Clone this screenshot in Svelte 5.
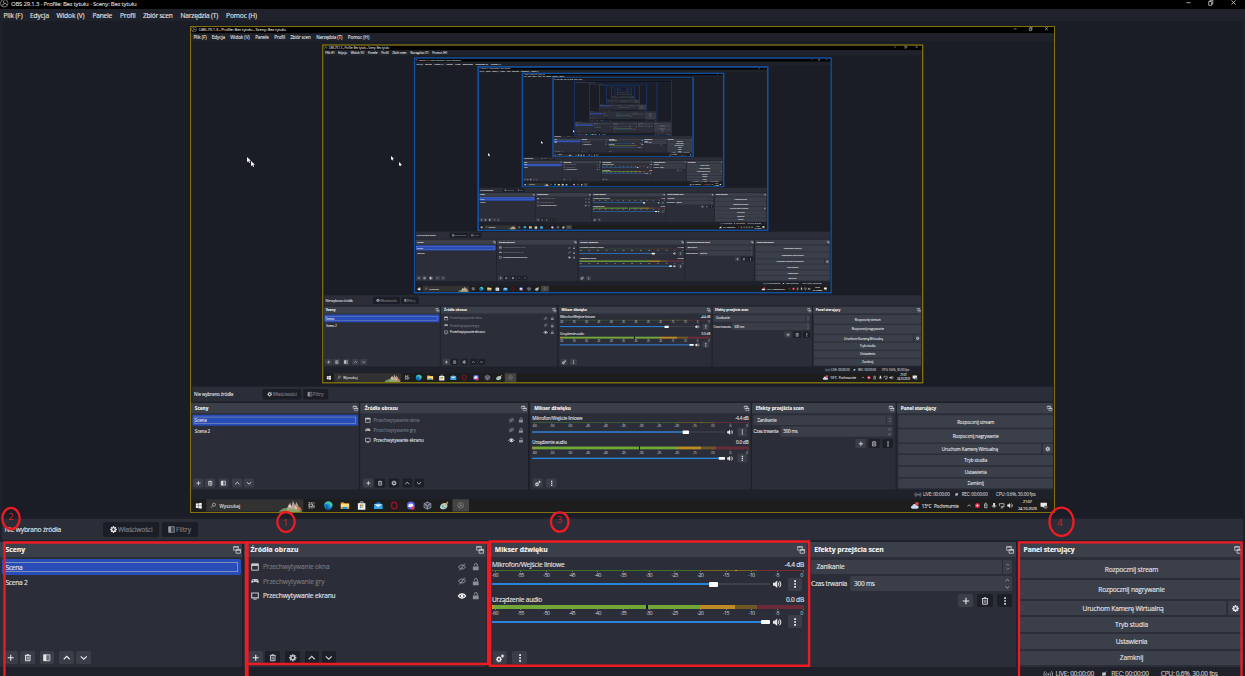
<script>
  const RATIO = 0.6935;
  const DEPTH = 15;
  const FAR = 7;

  const f = (d, c = 'currentColor') => ({ d, fill: c, stroke: 'none', w: 0 });
  const s = (d, w = 1.4, c = 'currentColor') => ({ d, fill: 'none', stroke: c, w });

  const icons = {
    plus: [s('M6 1.2v9.6M1.2 6h9.6', 1.7)],
    trash: [s('M1.3 2.2h9.4', 1.6), s('M2.4 3v7.8h7.2V3', 1.5), s('M4.6 4v5.2M6 4v5.2M7.4 4v5.2', 0.9), f('M4.2 .4h3.6v1.4H4.2z')],
    filter: [s('M1 1.2h10v9.6H1z', 1.2), f('M1 1h4.6v10H1z'), s('M7.6 1.6v8.8M9.4 1.6v8.8', 0.6)],
    up: [s('M1.2 8.4 6 3.8l4.8 4.6', 1.9)],
    down: [s('M1.2 3.8 6 8.4l4.8-4.6', 1.9)],
    gear: [s('M6 2.8a3.2 3.2 0 1 1 0 6.4a3.2 3.2 0 1 1 0-6.4z', 2.4), s('M6 .2v2M6 9.8v2M.2 6h2M9.8 6h2M1.9 1.9l1.3 1.3M8.8 8.8l1.3 1.3M10.1 1.9 8.8 3.2M3.2 8.8l-1.3 1.3', 2.3)],
    gears: [s('M4.2 5a2.5 2.5 0 1 1 0 5a2.5 2.5 0 1 1 0-5z', 2), s('M4.2 3.4v1.2M4.2 10.4v1.3M.1 7.5h1.3M7 7.5h1.3M1.3 4.6l.9.9M6.2 9.5l.9.9M7.1 4.6l-.9.9M2.2 9.5l-.9.9', 1.5), s('M9.2 1.5a1.3 1.3 0 1 1 0 2.6a1.3 1.3 0 1 1 0-2.6z', 1.4), s('M9.2.3v5M6.8 2.8h5', 0.8)],
    dots: [f('M4.7 .4h2.8v2.6H4.7zM4.7 4.7h2.8v2.6H4.7zM4.7 9h2.8v2.6H4.7z')],
    popout: [s('M8 5V1H1v5.4h3', 1.2), f('M1 .6h7.4v1.8H1z'), s('M4.6 5.2h6.6v5.6H4.6z', 1.3), f('M4.4 5h7v2h-7z')],
    window: [s('M1 1.4h10v9.4H1z', 1.5), f('M1 1h10v3.6H1z')],
    pad: [f('M3 3h6c2.600 0 3.400 5.800 1.600 6C9.200 9 9 7.600 7.900 7.600H4.100C3 7.600 2.800 9 1.400 9-.4 8.800.4 3 3 3z'), s('M2.400 5.200h2M3.400 4.200v2M8.400 5.200h1', 0.8, '#2b2e39')],
    screen: [s('M1 1.400h10v7.400H1z', 1.6), s('M3.500 10.900h5', 1.3)],
    eye: [s('M.6 6C3 1.800 9 1.800 11.400 6 9 10.200 3 10.200.6 6z', 1.8), f('M6 3.800a2.200 2.200 0 1 1 0 4.400a2.200 2.200 0 1 1 0-4.400z')],
    eyeoff: [s('M.8 6C3 2 9 2 11.200 6 9 10 3 10 .8 6z', 1.4), s('M10.500.8 1.800 11.200M8.200 4 4 9', 1.4)],
    lock: [f('M1.400 5.600h9.200v6H1.400z'), s('M8.600 5.600V3.200a2.400 2.400 0 0 0-4.800 0v.8', 1.6)],
    speaker: [f('M0 4h2.400L6 .8v10.400L2.400 8H0z'), s('M7.400 3.600c1.200 1.400 1.200 3.400 0 4.800M9.200 1.800c2.400 2.400 2.400 6 0 8.400', 1.500)],
    obs: [s('M6 .7a5.300 5.300 0 1 1 0 10.600a5.300 5.300 0 1 1 0-10.600z', 0.9), s('M6 6.200C4.600 5 4.600 3 6 2.200M6 6.200c1.800-.6 3.400.6 3.400 2.200M6 6.200C5.800 8 4 9 2.600 8.200', 1.3)],
    min: [s('M1 6.500h10', 1.8)],
    restore: [s('M1.500 3.500h6.500v8H1.500zM4 3.500V.8h6.500v8H8', 1.6)],
    close: [s('M1.200 1.200l9.600 9.600M10.800 1.200l-9.600 9.600', 1.9)],
    live: [f('M6 4.800a1.300 1.300 0 1 1 0 2.600a1.300 1.300 0 1 1 0-2.600z'), s('M3.600 3.400c-1.400 1.500-1.400 3.700 0 5.200M8.400 3.400c1.400 1.500 1.400 3.700 0 5.200M1.600 1.600c-2.200 2.500-2.200 6.300 0 8.800M10.400 1.600c2.200 2.500 2.200 6.300 0 8.800', 1)],
    rec: [f('M2.500 3h7v6h-7z'), s('M10.500.8 1.500 11.200', 1.200)],
    win: [f('M0 1.600 5 .9v4.700H0zM5.700.8 12 0v5.600H5.700zM0 6.300h5v4.800l-5-.7zM5.700 6.300H12V12l-6.300-.9z', '#f2f2f2')],
    search: [s('M7.600.9a3.300 3.300 0 1 1 0 6.600a3.300 3.300 0 1 1 0-6.600zM5.200 6.700 1 11', 1.200)],
    task: [s('M1.500 3.500h6v5h-6zM.6 1h2.400M5.500 1h2.500M.6 11h2.400M5.500 11h2.500M10.500 1v2M10.500 5v6', 1.500)],
    edge: [f('M6 0a6 6 0 1 1 0 12a6 6 0 1 1 0-12z', '#1787cf'), f('M.3 5C1.200 1.700 4 .2 7 .3c3 .2 5 2.700 5 5 0 2-2 2.900-3.900 2.400C8.600 5 6 3 3.400 3.600 2 4 .8 4.400.3 5z', '#43c6a5'), f('M4.400 7c.2 3 3 4 6 2.700C9 12 6 12.400 4 11.200 1.700 9.800 1.600 7 4.200 5z', '#0b58a5')],
    folder: [f('M0 1.500h4.500l1 1.300H12v8.400H0z', '#e9ad2b'), f('M0 4h12v4H0z', '#ffe08a'), f('M2.500 8h7v3.200h-7z', '#2e8fdc')],
    store: [f('M.6 2.600h10.800V12H.6z', '#eef2f4'), s('M4 2.600V.7h4v1.900', 1, '#d7e7f2'), f('M3.600 4.600h2.200v2.200H3.600z', '#e3533a'), f('M6.300 4.600h2.200v2.200H6.300z', '#6ab04a'), f('M3.600 7.300h2.200v2.200H3.600z', '#2b90dc'), f('M6.300 7.300h2.200v2.200H6.300z', '#edb52b')],
    mail: [f('M0 4l6-3.400L12 4v7.200H0z', '#1273c4'), f('M0 4h12L6 8.400z', '#e9f5fc'), f('M0 4.400l6 4 6-4v6.800H0z', '#33a7ea')],
    opera: [s('M6 1.200C3.800 1.200 2 3.300 2 6s1.800 4.800 4 4.800S10 8.700 10 6 8.200 1.200 6 1.200z', 2, '#96122c')],
    discord: [f('M6 .2a5.800 5.800 0 1 1 0 11.600a5.800 5.800 0 1 1 0-11.600z', '#5560e8'), f('M3 4c2-1 4-1 6 0l1 3.600C8.600 9 3.400 9 2 7.600z', '#f3f4ff'), f('M9 7a2.500 2.500 0 1 1 0 5a2.500 2.500 0 1 1 0-5z', '#ea3d46')],
    hex: [s('M6 .8l4.800 2.600v5.200L6 11.200 1.200 8.600V3.400z', 1.6, '#7e829f'), s('M6 3.400l2.400 1.400v2.600L6 8.800 3.600 7.400V4.800zM1.200 3.400l4.800 2.600 4.800-2.600M6 6v5', 1.1, '#a2a6bd')],
    paint: [f('M0 8C1 3 6 1.600 9 3s2 6-1 7.600C5 12 0 12 0 8z', '#b7ccd6'), f('M3 6h2v2H3zM5.500 8.500h2v1.500h-2z', '#49a65a'), f('M11.500 0 6 6l1.500 1L12 1.500z', '#e2a84d')],
    cloud: [f('M2.600 10.500C-.6 10.500-.4 6.500 2.300 6.300 3 3.300 7 3 8 5.800c3.800-.2 4.400 4.700 1.200 4.700z', '#c9dcf2'), f('M8.800 1a2.600 2.600 0 1 1 0 5.200a2.600 2.600 0 1 1 0-5.200z', '#e0483c')],
    red: [f('M6 .4a5.600 5.600 0 1 1 0 11.200a5.600 5.600 0 1 1 0-11.200z', '#d91e3c'), f('M4 4h4v4H4z', '#fff')],
    phone: [s('M3.500 2.500h5v8.500h-5zM5 .8h2M5 6.500h2', 1.5)],
    mic: [f('M4 .5h4v6.800H4z'), s('M2.300 5.500v3h7.400v-3M6 8.500v3', 1.4)],
    net: [s('M1 2h10v6.500H1zM4 11h5', 1.5), f('M0 7h4v4H0z', '#1d1d1d')],
    note: [f('M0 1h11v7H6.500L4 10.500V8H0z', '#e8e8e8'), f('M9 6a3 3 0 1 1 0 6a3 3 0 1 1 0-6z', '#6e6e6e')]
  };

  const menus = [['Plik (F)', 19, 7.5], ['Edycja', 19, 7.5], ['Widok (V)', 28, 8], ['Panele', 19.5, 8], ['Profil', 15.5, 7.5], ['Zbiór scen', 29.5, 8], ['Narzędzia (T)', 37.5, 8], ['Pomoc (H)', 31, 0]];
  const sources = [['window', 'Przechwytywanie okna', 66.5, false], ['pad', 'Przechwytywanie gry', 61.5, false], ['screen', 'Przechwytywanie ekranu', 72.5, true]];
  const ticks = [-60, -55, -50, -45, -40, -35, -30, -25, -20, -15, -10, -5, 0];
  const channels = [
    { name: 'Mikrofon/Wejście liniowe', w: 72.5, db: '-4.4 dB', dw: 19.5, loud: false, pos: 221.5 },
    { name: 'Urządzenie audio', w: 50, db: '0.0 dB', dw: 18, loud: true, pos: 273.5 }
  ];
  const controls = [['Rozpocznij stream', 53.5, 18.5], ['Rozpocznij nagrywanie', 66.5, 18.5], ['Uruchom Kamerę Wirtualną', 81, 14.8], ['Tryb studia', 33, 14.8], ['Ustawienia', 31.5, 14.8], ['Zamknij', 23.5, 14.8]];
  const apps = ['task', 'edge', 'folder', 'store', 'mail', 'opera', 'discord', 'hex', 'paint', 'obs'];
  const cursors = [[247, 157, 6], [250.5, 161, 6], [390.5, 156, 4.6], [399, 161.5, 4.6], [488, 153, 3.5], [541, 141, 3], [573, 130, 2.5]];

  const rim = (level) => (level < 3 ? '#80700e' : level < 7 ? '#1450a0' : '#1a3a78');
  const rimWidth = (level) => (level < 7 ? 1.2 : 0.6) / RATIO ** level;

  // Spreads a label over a fixed width by adjusting its tracking.
  function fit(node, width) {
    const cs = getComputedStyle(node);
    const ctx = document.createElement('canvas').getContext('2d');
    ctx.font = `${cs.fontWeight} 100px "Open Sans"`;
    const natural = (ctx.measureText(node.textContent).width / 100) * parseFloat(cs.fontSize);
    node.style.letterSpacing = `${(width - natural) / node.textContent.length}px`;
  }
</script>

{#snippet icon(name, size)}
  <svg class="ico" viewBox="0 0 12 12" style:width="{size}px" style:height="{size}px">
    {#each icons[name] as p}<path d={p.d} fill={p.fill} stroke={p.stroke} stroke-width={p.w} />{/each}
  </svg>
{/snippet}

{#snippet screen(level)}
  {#snippet label(text, width)}
    {#if level < FAR}<span class="lbl" use:fit={width} style:width="{width}px">{text}</span>{:else}<span class="bar" style:width="{width}px"></span>{/if}
  {/snippet}
  {#snippet head(text, width)}
    <header>{@render label(text, width)}{@render icon('popout', 8)}</header>
  {/snippet}
  <div class="desk">
    <div class="title">
      {@render icon('obs', 8.500)}
      {@render label('OBS 29.1.3 - Profile: Bez tytułu - Sceny: Bez tytułu', 125.5)}
      <div class="winbtns">{@render icon('min', 5)}{@render icon('restore', 5.5)}{@render icon('close', 5)}</div>
    </div>
    <nav>
      {#each menus as m}<div style:margin-right="{m[2]}px">{@render label(m[0], m[1])}</div>{/each}
    </nav>
    <div class="preview">
      {#if level < DEPTH}
        <div class="frame" style:outline="{rimWidth(level + 1)}px solid {rim(level + 1)}">
          <div class="scaled">{@render screen(level + 1)}</div>
        </div>
      {/if}
    </div>
    <div class="context">
      {@render label('Nie wybrano źródła', 56.5)}
      <button class="dark props">{@render icon('gear', 7)}{@render label('Właściwości', 34.5)}</button>
      <button class="dark filt">{@render icon('filter', 7)}{@render label('Filtry', 15)}</button>
    </div>
    <div class="docks">
      <section>
        {@render head('Sceny', 19.5)}
        <div class="scene sel"><i></i>{@render label('Scena', 17)}</div>
        <div class="scene">{@render label('Scena 2', 22)}</div>
        <div class="tools">
          <b>{@render icon('plus', 7.5)}</b><b>{@render icon('trash', 7.5)}</b>
          <b class="gap">{@render icon('filter', 7.5)}</b>
          <b class="gap">{@render icon('up', 7.5)}</b><b>{@render icon('down', 7.5)}</b>
        </div>
      </section>
      <section>
        {@render head('Źródła obrazu', 48)}
        <div class="sources">
          {#each sources as src}
            <div class="src" class:on={src[3]}>
              {@render icon(src[0], 8)}{@render label(src[1], src[2])}
              <span class="flags">{@render icon(src[3] ? 'eye' : 'eyeoff', 8)}{@render icon('lock', 7.5)}</span>
            </div>
          {/each}
        </div>
        <div class="tools src-tools">
          <b>{@render icon('plus', 7.5)}</b><b class="dk">{@render icon('trash', 7.5)}</b>
          <b class="gap dk">{@render icon('gear', 7.5)}</b>
          <b class="gap dk">{@render icon('up', 7.5)}</b><b class="dk">{@render icon('down', 7.5)}</b>
        </div>
      </section>
      <section class="mixer">
        {@render head('Mikser dźwięku', 53)}
        {#each channels as c}
          <div class="chan" class:loud={c.loud}>
            <div class="names">{@render label(c.name, c.w)}{@render label(c.db, c.dw)}</div>
            <div class="meter"></div>
            <div class="scale">{#each ticks as t}<span>{#if level < FAR}{t}{/if}</span>{/each}</div>
            <div class="fader">
              <div class="track"><div class="fill" style:width="{c.pos}px"></div><div class="knob" style:left="{c.pos - 4.5}px"></div></div>
              {@render icon('speaker', 8.5)}
              <b>{@render icon('dots', 8)}</b>
            </div>
          </div>
        {/each}
        <div class="tools mix-tools"><b>{@render icon('gears', 8.5)}</b><b>{@render icon('dots', 8)}</b></div>
      </section>
      <section class="trans">
        {@render head('Efekty przejścia scen', 69.5)}
        <div class="field combo">{@render label('Zanikanie', 28)}<span class="arrows">{@render icon('up', 3.5)}{@render icon('down', 3.5)}</span></div>
        <div class="dur">
          {@render label('Czas trwania', 36)}
          <div class="field">{@render label('300 ms', 20.5)}<span class="arrows wide">{@render icon('up', 4.5)}{@render icon('down', 4.5)}</span></div>
        </div>
        <div class="tbtns"><b>{@render icon('plus', 8)}</b><b class="dk">{@render icon('trash', 8)}</b><b class="dk">{@render icon('dots', 8)}</b></div>
      </section>
      <section class="panel">
        {@render head('Panel sterujący', 51)}
        <div class="ctl">
          {#each controls as c, i}
            <div class="row" style:height="{c[2]}px">
              <button>{@render label(c[0], c[1])}</button>
              {#if i === 2}<button class="cog">{@render icon('gear', 7)}</button>{/if}
            </div>
          {/each}
        </div>
      </section>
    </div>
    <footer>
      {@render icon('live', 8.5)}{@render label('LIVE: 00:00:00', 38.5)}
      <span class="rec">{@render icon('rec', 6)}</span>{@render label('REC: 00:00:00', 37.5)}
      <span class="cpu">{@render label('CPU: 0.6%, 30.00 fps', 57)}</span>
    </footer>
    <div class="taskbar">
      <div class="start">{@render icon('win', 8.5)}</div>
      <div class="search">
        {@render icon('search', 8)}{@render label('Wyszukaj', 30)}
        <svg class="castle" viewBox="0 0 36 18">
          <path d="M0 18C5 11 12 10 18 12l7 6z" fill="#71945a" />
          <path d="M11 18l3-10 3-4 2 5 2-8 3 7 2-5 3 6 2 9z" fill="#b5a39a" />
          <path d="M9 18c3-6 10-6 16-4 4 1 8-1 10 4z" fill="#8aa25c" />
          <path d="M25 8l6 2 3 5-7-1z" fill="#c47654" />
          <path d="M14 9l3-2 2 5zM23 8l2 5 3-1z" fill="#e5d6c0" />
        </svg>
      </div>
      {#each apps as a}<div class="app" class:active={a === 'obs'}>{@render icon(a, a === 'obs' || a === 'task' ? 9.5 : 12)}</div>{/each}
      <div class="tray">
        {@render icon('cloud', 12)}
        <div class="weather">{@render label('13°C', 14)}{@render label('Pochmurnie', 36)}</div>
        {#each ['up', 'red', 'phone', 'mic', 'net', 'speaker'] as n}<div class="ti">{@render icon(n, n === 'up' ? 6 : 8)}</div>{/each}
        <div class="clock">{@render label('21:07', 13)}{@render label('24.10.2023', 27)}</div>
        {@render icon('note', 10)}
      </div>
    </div>
  </div>
{/snippet}

<main>
  {@render screen(0)}
  {#each cursors as c}
    <svg class="cursor" viewBox="0 0 8 12" style:left="{c[0]}px" style:top="{c[1]}px" style:height="{c[2]}px"><path d="M0 0v10.500l2.500-2.300L4.200 12l2-1-1.700-3.500H8z" fill="#f4f4f4" /></svg>
  {/each}
  <svg class="marks" viewBox="0 0 1245 676" fill="none" stroke="#ed1c24" stroke-width="2.300">
    <path d="M4.500 680V542.500H246V680" />
    <path d="M247.500 680V542.500H488V664H247.500" />
    <path d="M490 541.500H809V665.800H490z" stroke-width="2.600" />
    <path d="M1019 680V542.300H1241.500V680" />
    <ellipse cx="11" cy="518.500" rx="8.700" ry="10.700" />
    <ellipse cx="286" cy="522" rx="8.700" ry="10" />
    <ellipse cx="559.700" cy="522" rx="8.800" ry="9.700" />
    <ellipse cx="1061.500" cy="521.800" rx="12" ry="14.200" />
    <g fill="#dc1f27" stroke="none" font-size="9.500" text-anchor="middle">
      <text x="11" y="519.500">2</text>
      <text x="285.500" y="525.700">1</text>
      <text x="559.500" y="522.700">3</text>
      <text x="1059.700" y="526">4</text>
    </g>
  </svg>
</main>

<style>
  :global(body) { background: #1e2129; overflow: hidden; }
  main { position: relative; width: 1245px; height: 676px; overflow: hidden; font-family: 'Open Sans', 'Noto Sans', sans-serif; }
  .desk { width: 1245px; height: 699px; background: #1e2129; color: #e4e5e8; font-size: 6.6px; line-height: 1; overflow: hidden; display: flex; flex-direction: column; }
  .desk > * { flex: none; }
  .ico { display: block; flex: none; overflow: visible; }
  .lbl { display: block; flex: none; white-space: nowrap; line-height: 9px; -webkit-text-stroke: 0.12px currentColor; }
  .bar { display: block; flex: none; height: 3.500px; background: currentColor; opacity: 0.45; }
  button { font: inherit; color: inherit; border: 0; padding: 0; margin: 0; }

  .title { height: 9px; background: #000; display: flex; align-items: center; gap: 2.5px; font-size: 6px; color: #dcdcdc; }
  .title .lbl { margin-top: -0.500px; }
  .title > .ico { color: #b5b5b5; margin-top: -2px; }
  .winbtns { margin-left: auto; display: flex; gap: 17px; padding-right: 9.500px; margin-top: -3px; }
  nav { height: 12px; display: flex; align-items: center; padding-left: 3.5px; background: #1f222a; }
  .preview { height: 495.5px; margin: 0 2px; background: #1a1c26; overflow: hidden; }
  .frame { width: 863.4px; height: 484.5px; margin: 6px 0 0 189px; overflow: hidden; }
  .scaled { width: 1245px; height: 699px; transform: scale(0.6935); transform-origin: 0 0; }

  .context { margin-top: 2px; height: 21.7px; margin-left: 2px; margin-right: 2px; background: #2b2d38; display: flex; align-items: center; padding-left: 2.5px; box-sizing: border-box; }
  .dark { background: #1b1d27; color: #82848b; border-radius: 2px; height: 14.5px; display: flex; align-items: center; }
  .dark .ico { color: #e0e1e4; }
  .props { width: 55.5px; margin-left: 42px; gap: 1.5px; padding-left: 6.500px; box-sizing: border-box; }
  .filt { width: 35.5px; margin-left: 3.5px; gap: 1.5px; padding-left: 5.5px; box-sizing: border-box; }
  .filt .ico { color: #9a9ca3; }

  .docks { margin-top: 2.300px; display: grid; grid-template-columns: 242px 242px 318px 207px 225px; column-gap: 2.25px; height: 124.500px; }
  section { background: #2b2e39; display: flex; flex-direction: column; border-radius: 1px; overflow: hidden; }
  header { flex: none; height: 14.500px; background: #3b3f49; display: flex; align-items: center; justify-content: space-between; padding: 0 1.500px 0 5.5px; font-weight: 700; color: #f4f4f5; font-size: 6.8px; }
  header .lbl { margin-top: 0.500px; }
  header .ico { color: #c5c7cc; }
  section:nth-child(2) header, .mixer header { padding-left: 6.300px; padding-right: 2px; }
  section:first-child .scene { height: 15.5px; display: flex; align-items: center; padding-left: 4px; margin: 0 1.5px; position: relative; }
  section:first-child .sel { margin-top: 2.300px; background: #284cb8; border-radius: 2px; }
  .sel i { position: absolute; inset: 2.500px 2.500px; border: 0.8px solid #8090bd; }
  .tools { margin-top: auto; display: flex; padding: 0 0 2.500px 3px; gap: 2.300px; }
  b { flex: none; width: 14.7px; height: 13px; background: #3b3e49; border-radius: 2px; display: flex; align-items: center; justify-content: center; color: #e8e9eb; }
  b.dk { background: #1c1e28; color: #c9cbcf; }
  b.gap { margin-left: 2.700px; }
  .sources { padding-top: 2.500px; }
  .src { height: 14.600px; display: flex; align-items: center; gap: 4.300px; padding-left: 6.500px; color: #777a83; }
  .src .ico { color: #c4c6cb; }
  .src.on { color: #e4e5e8; }
  .flags { margin-left: auto; display: flex; align-items: center; gap: 6px; padding-right: 7px; }
  .src .flags .ico { color: #8d8f97; }
  .on .flags .ico:first-child { color: #fff; }
  .src-tools { padding-left: 4px; }

  .chan { margin: 3px 0 0 3.500px; width: 312px; height: 29.700px; display: flex; flex-direction: column; }
  .names { display: flex; justify-content: space-between; height: 9.200px; }
  .meter { flex: none; margin-top: 1px; height: 1.200px; background: linear-gradient(90deg, #3f6e2d 66.7%, #77611f 66.7%, #77611f 78%, #d9a520 78%, #d9a520 78.5%, #77611f 78.5%, #77611f 85%, #7c2936 85%); }
  .loud { margin-top: 4.900px; height: 36px; }
  .loud .meter { height: 3.800px; background: linear-gradient(90deg, #d08a2a 0.5%, #71a737 0.5%, #71a737 49.3%, #10130f 49.3%, #10130f 49.9%, #71a737 49.9%, #71a737 66.7%, #bd8b22 66.7%, #bd8b22 77.8%, #6d5825 77.8%, #6d5825 85%, #6a2a38 85%); }
  .scale { display: flex; justify-content: space-between; margin: 0 -5px 0 -3px; height: 7px; font-size: 5.400px; color: #cfd0d4; }
  .scale span { width: 12px; text-align: center; line-height: 8.600px; letter-spacing: -0.600px; background: linear-gradient(#9a9ca2, #9a9ca2) 50% 0 / 0.7px 1.3px no-repeat; }
  .scale span:last-child { text-indent: -3px; }
  .fader { display: flex; align-items: center; height: 12px; margin-top: 0.300px; }
  .loud .fader { margin-top: 0.300px; }
  .track { position: relative; width: 278px; height: 2px; background: #3d404b; margin-right: 3px; }
  .fill { height: 100%; background: #2a82dc; }
  .knob { position: absolute; top: -1.300px; width: 9px; height: 4.500px; background: #fff; border-radius: 1px; }
  .fader b { margin-left: 6px; }
  .mix-tools { padding-left: 4px; gap: 5px; }

  .field { background: #3b3e49; border-radius: 2px; display: flex; align-items: center; justify-content: space-between; }
  .combo { margin: 3px 3.500px 0 2.700px; height: 14px; padding-left: 5px; }
  .arrows { align-self: stretch; width: 9px; border-left: 0.7px solid #292b35; display: flex; flex-direction: column; align-items: center; justify-content: center; gap: 1px; color: #b8bac0; }
  .arrows.wide { border: 0; width: 11px; gap: 2.500px; }
  .dur { display: flex; align-items: center; margin: 2.500px 3.500px 0 2.300px; height: 15px; }
  .dur .field { flex: 1; height: 15px; margin-left: 2.500px; padding-left: 4.500px; }
  .tbtns { display: flex; justify-content: flex-end; gap: 4px; margin: 2.600px 3.500px 0 0; }
  .tbtns b { width: 15.500px; }

  .ctl { display: flex; flex-direction: column; gap: 1.850px; padding: 3px 0 0 2px; }
  .row { display: flex; gap: 2px; }
  .row button { flex: 1; background: #3b3f49; border-radius: 2px; display: flex; align-items: center; justify-content: center; }
  .row .cog { flex: 0 0 15px; }

  footer { height: 14px; display: flex; align-items: center; padding-left: 1043.500px; color: #c9cbd0; gap: 3.500px; }
  footer .rec { margin-left: 3.300px; margin-right: 1px; }
  .cpu { margin-left: 8.500px; }
  .taskbar { height: 18.500px; background: #1d1d1d; display: flex; align-items: center; color: #e2e2e2; }
  .start { width: 22px; display: flex; justify-content: center; }
  .search { width: 140px; height: 18.500px; background: #323232; display: flex; align-items: center; padding-left: 6px; box-sizing: border-box; gap: 5px; }
  .castle { width: 36px; height: 18px; margin: 1px 0 0 auto; }
  .app { width: 23.900px; height: 18.500px; display: flex; align-items: center; justify-content: center; }
  .app:first-of-type { margin-left: 1px; }
  .app.active { background: #444; color: #999; }
  .tray { margin-left: auto; display: flex; align-items: center; padding-right: 10px; }
  .weather { display: flex; gap: 3.500px; margin: 0 9px 0 4px; }
  .ti { width: 11.800px; display: flex; justify-content: center; }
  .clock { width: 38px; display: flex; flex-direction: column; align-items: center; font-size: 5.800px; }

  .cursor { position: absolute; }
  .marks { position: absolute; inset: 0; width: 1245px; height: 676px; }
</style>
